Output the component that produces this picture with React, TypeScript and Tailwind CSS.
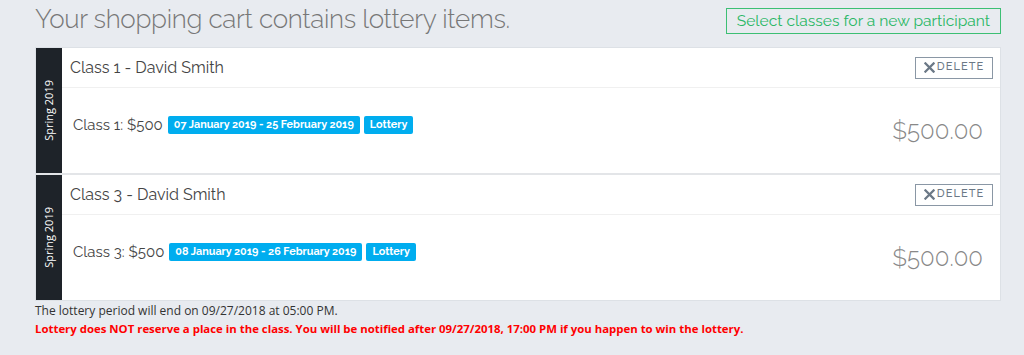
import React from "react";

interface CartItem {
  title: string;
  line: string;
  dates: string;
  price: string;
  term: string;
}

const items: CartItem[] = [
  {
    title: "Class 1 - David Smith",
    line: "Class 1: $500",
    dates: "07 January 2019 - 25 February 2019",
    price: "$500.00",
    term: "Spring 2019",
  },
  {
    title: "Class 3 - David Smith",
    line: "Class 3: $500",
    dates: "08 January 2019 - 26 February 2019",
    price: "$500.00",
    term: "Spring 2019",
  },
];

const raleway = "font-['Raleway','Lato',sans-serif]";

const CartRow: React.FC<{ item: CartItem; last: boolean }> = ({ item, last }) => (
  <div className={`flex ${last ? "" : "border-b-2 border-[#e3e5e8]"}`}>
    <div className="w-[26px] shrink-0 bg-[#1e2329] flex items-center justify-center">
      <span className="[writing-mode:vertical-rl] rotate-180 text-white text-[11px] font-['Open_Sans',sans-serif] whitespace-nowrap">
        {item.term}
      </span>
    </div>
    <div className="flex-1 bg-white">
      <div className="h-[40px] flex items-center justify-between pl-[8px] pr-[7px] border-b border-[#f0f0f0]">
        <span className={`${raleway} text-[16px] text-[#444]`}>{item.title}</span>
        <button className="h-[22px] w-[78px] border border-[#8a97a5] flex items-center justify-center gap-[2px] text-[#6b7886]">
          <svg width="11" height="11" viewBox="0 0 12 12" className="shrink-0">
            <path d="M1.5 1.5 L10.5 10.5 M10.5 1.5 L1.5 10.5" stroke="currentColor" strokeWidth="2.4" strokeLinecap="square" />
          </svg>
          <span className={`${raleway} text-[11px] tracking-[0.1em] font-medium`}>DELETE</span>
        </button>
      </div>
      <div className="h-[85px] flex items-center justify-between pl-[11px] pr-[17px]">
        <div className="flex items-center gap-[4px] mb-[11px]">
          <span className={`${raleway} text-[15px] text-[#444] mr-[1px]`}>{item.line}</span>
          <span className={`${raleway} h-[18px] px-[6px] rounded-[2px] bg-[#00adef] text-white text-[10.8px] font-bold flex items-center`}>
            {item.dates}
          </span>
          <span className={`${raleway} h-[18px] px-[6px] rounded-[2px] bg-[#00adef] text-white text-[10.8px] font-bold flex items-center`}>
            Lottery
          </span>
        </div>
        <span className={`${raleway} text-[24px] font-light text-[#888]`}>{item.price}</span>
      </div>
    </div>
  </div>
);

export default function App() {
  return (
    <div className="w-[1024px] h-[355px] bg-[#e8ebf0] pl-[35px] pr-[23px] overflow-hidden">
      <div className="flex items-start justify-between h-[47px]">
        <h1 className={`${raleway} font-light text-[26px] tracking-[-0.3px] leading-[36px] text-[#777] mt-[1px]`}>
          Your shopping cart contains lottery items.
        </h1>
        <button className={`${raleway} mt-[8px] h-[26px] px-[10px] border border-[#3cbf74] text-[#2bb866] text-[15.6px] flex items-center`}>
          Select classes for a new participant
        </button>
      </div>
      <div className="border border-[#dde1e6]">
        {items.map((item, i) => (
          <CartRow key={i} item={item} last={i === items.length - 1} />
        ))}
      </div>
      <div className="font-['Open_Sans',sans-serif] text-[12px] leading-[18px] mt-[1px]">
        <p className="text-[#333]">The lottery period will end on 09/27/2018 at 05:00 PM.</p>
        <p className="text-[#ff0000] font-bold text-[11.4px]">
          Lottery does NOT reserve a place in the class. You will be notified after 09/27/2018, 17:00 PM if you happen to win the lottery.
        </p>
      </div>
    </div>
  );
}
